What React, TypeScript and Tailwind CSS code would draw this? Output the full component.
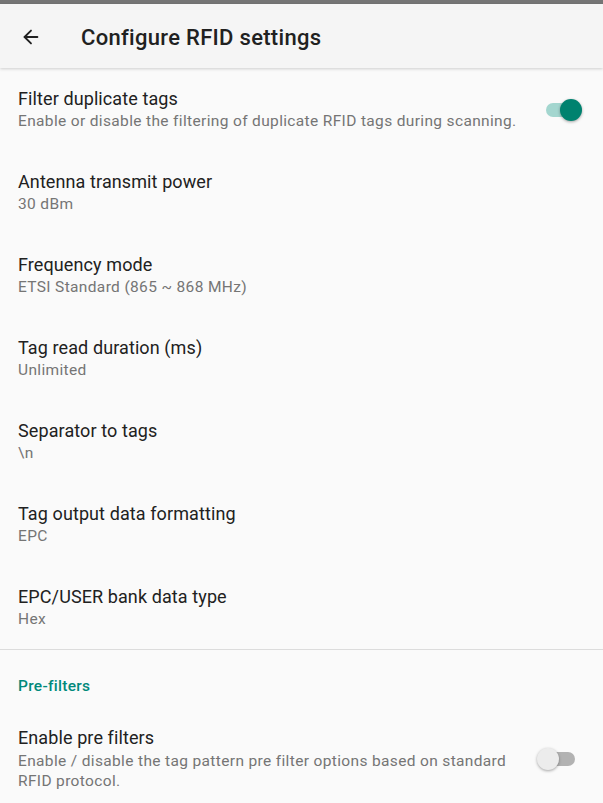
import { ArrowLeft } from "lucide-react";

const rows = [
  { title: "Antenna transmit power", value: "30 dBm" },
  { title: "Frequency mode", value: "ETSI Standard (865 ~ 868 MHz)" },
  { title: "Tag read duration (ms)", value: "Unlimited" },
  { title: "Separator to tags", value: "\\n" },
  { title: "Tag output data formatting", value: "EPC" },
  { title: "EPC/USER bank data type", value: "Hex" },
];

function Toggle({ on }: { on: boolean }) {
  return (
    <div className="relative h-[24px] w-[46px] shrink-0">
      <div
        className={
          "absolute left-[9px] top-[5px] h-[14px] w-[29px] rounded-full " +
          (on ? "bg-[#a3d6cf]" : "bg-[#b2b2b2]")
        }
      />
      <div
        className={
          "absolute top-[1px] h-[22px] w-[22px] rounded-full shadow-[0_1px_3px_rgba(0,0,0,0.35)] " +
          (on ? "left-[23px] bg-[#00826f]" : "left-0 bg-[#ececec]")
        }
      />
    </div>
  );
}

export default function App() {
  return (
    <div className="flex h-[803px] w-[603px] flex-col overflow-hidden bg-[#fafafa] font-['Roboto',sans-serif]">
      <div className="h-[4px] bg-[#757575]" />
      <div className="relative z-10 flex h-[64px] items-center bg-[#f5f5f5] shadow-[0_1px_3px_rgba(0,0,0,0.18)]">
        <ArrowLeft className="ml-[20px] mt-[2px] h-[22px] w-[22px] text-[#202020]" strokeWidth={2} />
        <h1 className="ml-[39px] mt-[2px] text-[22px] font-medium tracking-[0.3px] text-[#212121]">
          Configure RFID settings
        </h1>
      </div>

      <div className="flex h-[83px] items-center pl-[18px] pr-[20px]">
        <div className="flex-1">
          <div className="text-[18px] leading-[23px] tracking-[0.1px] text-[#212121]">Filter duplicate tags</div>
          <div className="text-[15.5px] leading-[23px] tracking-[0.35px] text-[#757575]">
            Enable or disable the filtering of duplicate RFID tags during scanning.
          </div>
        </div>
        <Toggle on />
      </div>

      {rows.map((r) => (
        <div key={r.title} className="flex h-[83px] flex-col justify-center px-[18px]">
          <div className="text-[18px] leading-[23px] tracking-[0.1px] text-[#212121]">{r.title}</div>
          <div className="text-[15.5px] leading-[23px] tracking-[0.35px] text-[#757575]">{r.value}</div>
        </div>
      ))}

      <div className="h-px bg-[#dcdcdc]" />

      <div className="flex h-[70px] items-center px-[18px] pt-[4px]">
        <span className="text-[15.5px] font-medium tracking-[0.3px] text-[#00897b]">Pre-filters</span>
      </div>

      <div className="flex items-center pl-[18px] pr-[20px] pt-[6px]">
        <div className="flex-1 pr-[20px]">
          <div className="text-[18px] leading-[23px] tracking-[0.1px] text-[#212121]">Enable pre filters</div>
          <div className="mt-[2px] text-[15.5px] leading-[20px] tracking-[0.35px] text-[#757575]">
            Enable / disable the tag pattern pre filter options based on standard RFID protocol.
          </div>
        </div>
        <Toggle on={false} />
      </div>
    </div>
  );
}
